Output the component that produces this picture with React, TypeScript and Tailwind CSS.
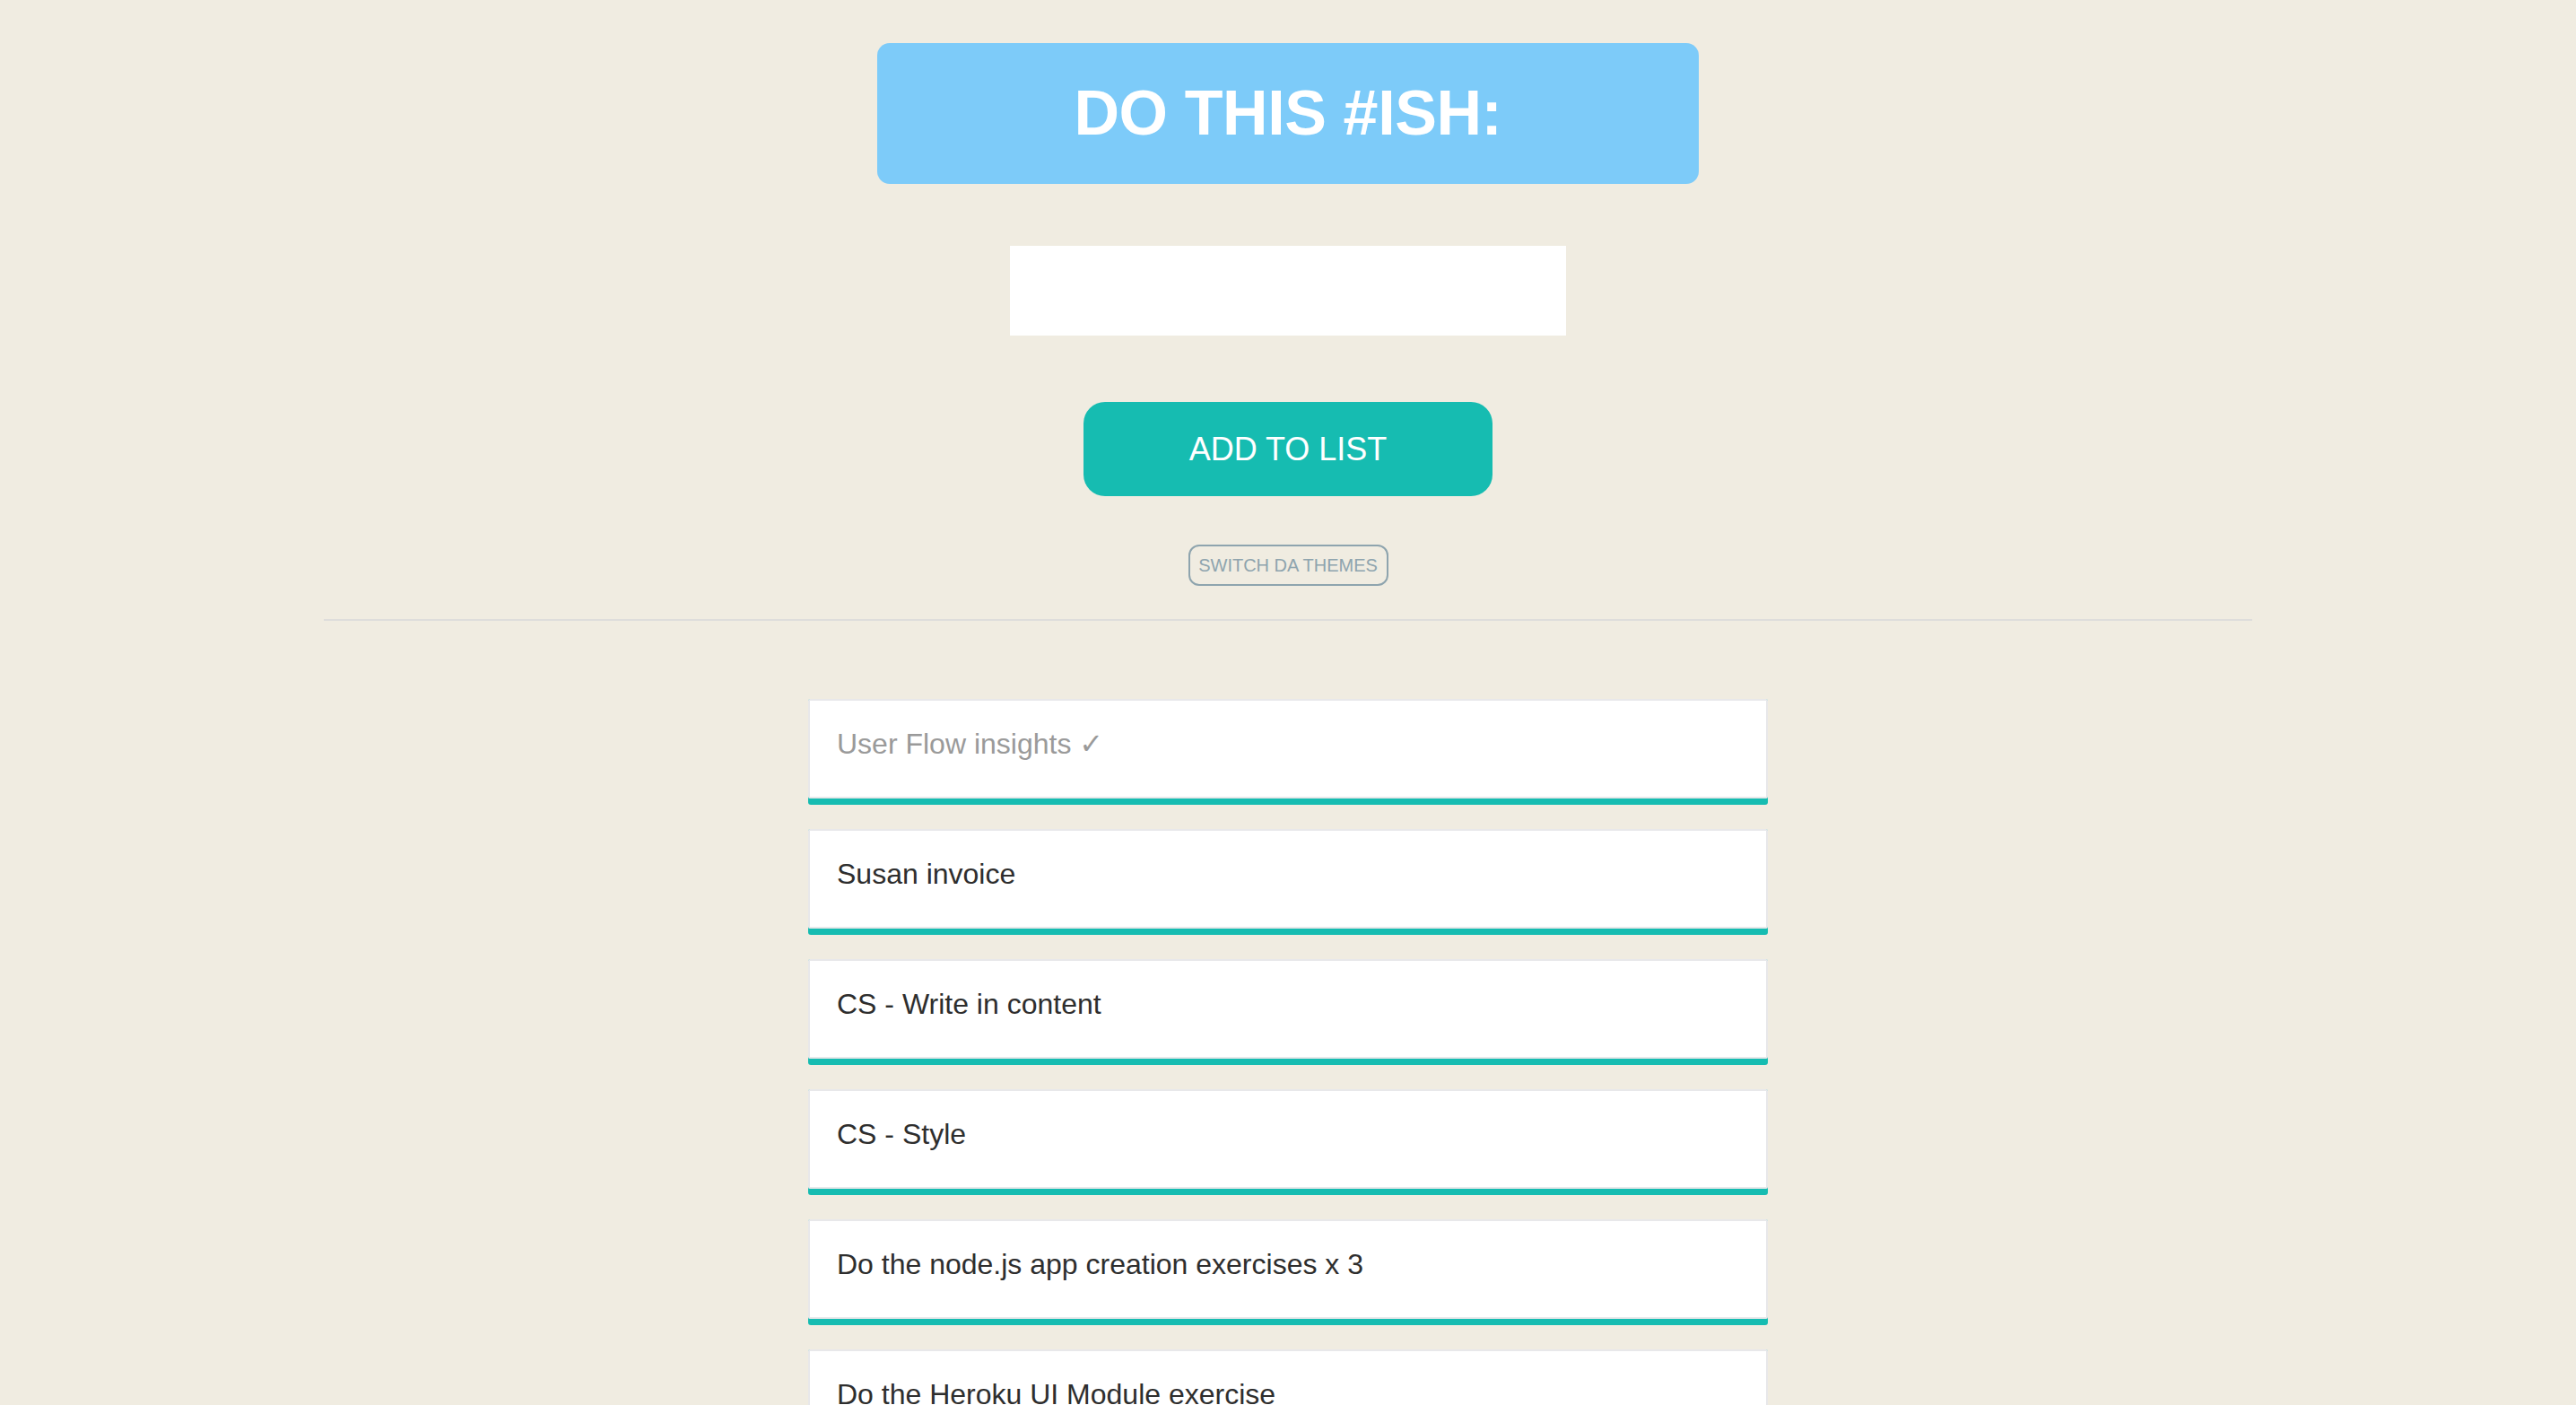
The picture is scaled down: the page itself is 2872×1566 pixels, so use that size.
import React from "react";

const items: { text: string; done?: boolean }[] = [
  { text: "User Flow insights \u2713", done: true },
  { text: "Susan invoice" },
  { text: "CS - Write in content" },
  { text: "CS - Style" },
  { text: "Do the node.js app creation exercises x 3" },
  { text: "Do the Heroku UI Module exercise" },
];

export default function App() {
  return (
    <div
      className="min-h-screen w-full bg-[#f0ece1] pb-[60px]"
      style={{ fontFamily: '"Liberation Sans", Arial, "DejaVu Sans", sans-serif' }}
    >
      <div className="flex flex-col items-center pt-[48px]">
        <div className="flex h-[157px] w-[916px] items-center justify-center rounded-[14px] bg-[#7dcbf9]">
          <h1 className="text-[70px] font-bold leading-none tracking-[-0.4px] text-white mb-[2px]">DO THIS #ISH:</h1>
        </div>

        <input
          type="text"
          className="mt-[69px] h-[100px] w-[620px] bg-white px-4 text-[32px] text-[#333] outline-none"
        />

        <button className="mt-[74px] flex h-[105px] w-[456px] items-center justify-center rounded-[24px] bg-[#16bcb1] text-[36px] leading-none text-white">
          ADD TO LIST
        </button>

        <button className="mt-[54px] flex h-[46px] w-[223px] items-center justify-center rounded-[12px] border-2 border-[#8ea4ae] text-[20px] leading-none text-[#8ea4ae]">
          SWITCH DA THEMES
        </button>
      </div>

      <div className="mx-auto mt-[37px] h-[2px] w-[2150px] bg-[#dedddb]" />

      <ul className="mx-auto mt-[87px] flex w-[1070px] flex-col gap-[27px]">
        {items.map((it) => (
          <li key={it.text} className="rounded-[3px] bg-[#16bcb1] pb-[7px]">
            <div className="rounded-[2px] border-2 border-[#e8e8ea] bg-white pl-[30px] pt-[24px] pb-[35px] text-[32px] leading-[48px]">
              <span className={it.done ? "text-[#9a9a9a]" : "text-[#2e2e2e]"}>{it.text}</span>
            </div>
          </li>
        ))}
      </ul>
    </div>
  );
}
